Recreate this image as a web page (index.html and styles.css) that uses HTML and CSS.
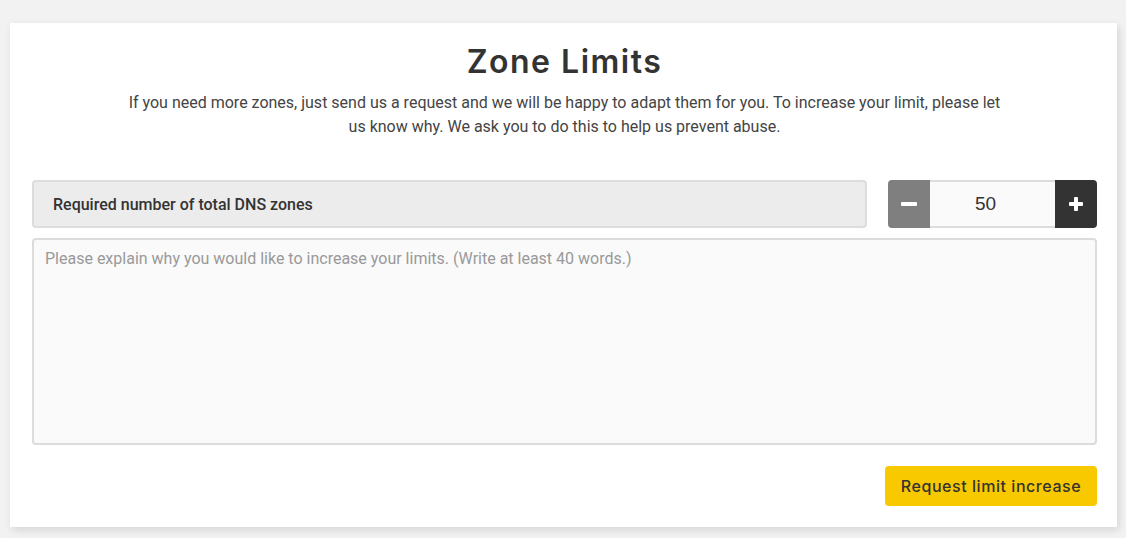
FILE: index.html
```html
<!DOCTYPE html>
<html lang="en">
<head>
    <meta charset="UTF-8">
    <meta name="viewport" content="width=device-width, initial-scale=1.0">
    <title>Zone Limits</title>
    <link rel="stylesheet" href="styles.css">
</head>
<body>
    <div class="card">
        <h1 class="card-title">Zone Limits</h1>
        <p class="card-intro">If you need more zones, just send us a request and we will be happy to adapt them for you. To increase your limit, please let us know why. We ask you to do this to help us prevent abuse.</p>

        <form class="limit-form">
            <div class="limit-row">
                <div class="limit-label">Required number of total DNS zones</div>
                <div class="spinner">
                    <button type="button" class="spin-btn spin-minus" aria-label="Decrease">
                        <svg width="16" height="4" viewBox="0 0 16 4"><rect width="16" height="4" rx="1" fill="#fff"/></svg>
                    </button>
                    <input type="text" class="spin-value" value="50">
                    <button type="button" class="spin-btn spin-plus" aria-label="Increase">
                        <svg width="14" height="14" viewBox="0 0 14 14"><rect x="5" y="0" width="4" height="14" rx="1" fill="#fff"/><rect x="0" y="5" width="14" height="4" rx="1" fill="#fff"/></svg>
                    </button>
                </div>
            </div>

            <textarea class="reason" placeholder="Please explain why you would like to increase your limits. (Write at least 40 words.)"></textarea>

            <div class="form-actions">
                <button type="submit" class="submit-btn">Request limit increase</button>
            </div>
        </form>
    </div>
</body>
</html>
```

FILE: styles.css
```css
* {
    margin: 0;
    padding: 0;
    box-sizing: border-box;
}

body {
    background-color: #f2f2f2;
    font-family: Roboto, "Liberation Sans", Arial, sans-serif;
    color: #444;
    padding: 23px 9px 11px 10px;
}

/* Main card */
.card {
    background-color: #fff;
    box-shadow: 2px 3px 8px rgba(0, 0, 0, 0.12);
    padding: 19px 20px 21px 22px;
    min-height: 504px;
}

.card-title {
    font-family: Inter, "Open Sans", sans-serif;
    font-weight: 600;
    font-size: 32px;
    line-height: 40px;
    letter-spacing: 1.5px;
    color: #333;
    text-align: center;
}

.card-intro {
    max-width: 880px;
    margin: 9px auto 0;
    font-size: 16px;
    line-height: 24px;
    text-align: center;
    color: #444;
}

.limit-form {
    margin-top: 41px;
}

/* Label + spinner row */
.limit-row {
    display: flex;
    gap: 21px;
    height: 48px;
}

.limit-label {
    flex: 1;
    display: flex;
    align-items: center;
    padding-left: 19px;
    background-color: #ececec;
    border: 2px solid #dcdcdc;
    border-radius: 4px;
    font-size: 16px;
    font-weight: 500;
    color: #333;
}

.spinner {
    display: flex;
    width: 209px;
}

.spin-btn {
    flex: none;
    width: 42px;
    border: none;
    display: flex;
    align-items: center;
    justify-content: center;
    cursor: pointer;
}

.spin-minus {
    background-color: #7f7f7f;
    border-radius: 4px 0 0 4px;
}

.spin-plus {
    background-color: #333;
    border-radius: 0 4px 4px 0;
}

.spin-value {
    flex: 1;
    min-width: 0;
    padding-right: 14px;
    border: none;
    border-top: 2px solid #dcdcdc;
    border-bottom: 2px solid #dcdcdc;
    background-color: #fafafa;
    text-align: center;
    font-family: "Liberation Sans", Arial, sans-serif;
    font-size: 19px;
    color: #333;
    outline: none;
}

/* Reason textarea */
.reason {
    display: block;
    width: 100%;
    height: 207px;
    margin-top: 10px;
    padding: 8px 11px;
    background-color: #fafafa;
    border: 2px solid #dcdcdc;
    border-radius: 4px;
    font-family: Roboto, "Liberation Sans", sans-serif;
    font-size: 16px;
    line-height: 22px;
    color: #444;
    resize: none;
    outline: none;
}

.reason::placeholder {
    color: #999;
}

.form-actions {
    display: flex;
    justify-content: flex-end;
    margin-top: 21px;
}

.submit-btn {
    width: 212px;
    height: 40px;
    background-color: #f9c900;
    border: none;
    border-radius: 4px;
    font-family: Inter, "Open Sans", sans-serif;
    font-size: 16px;
    font-weight: 500;
    letter-spacing: 0.55px;
    color: #333;
    cursor: pointer;
}
```
